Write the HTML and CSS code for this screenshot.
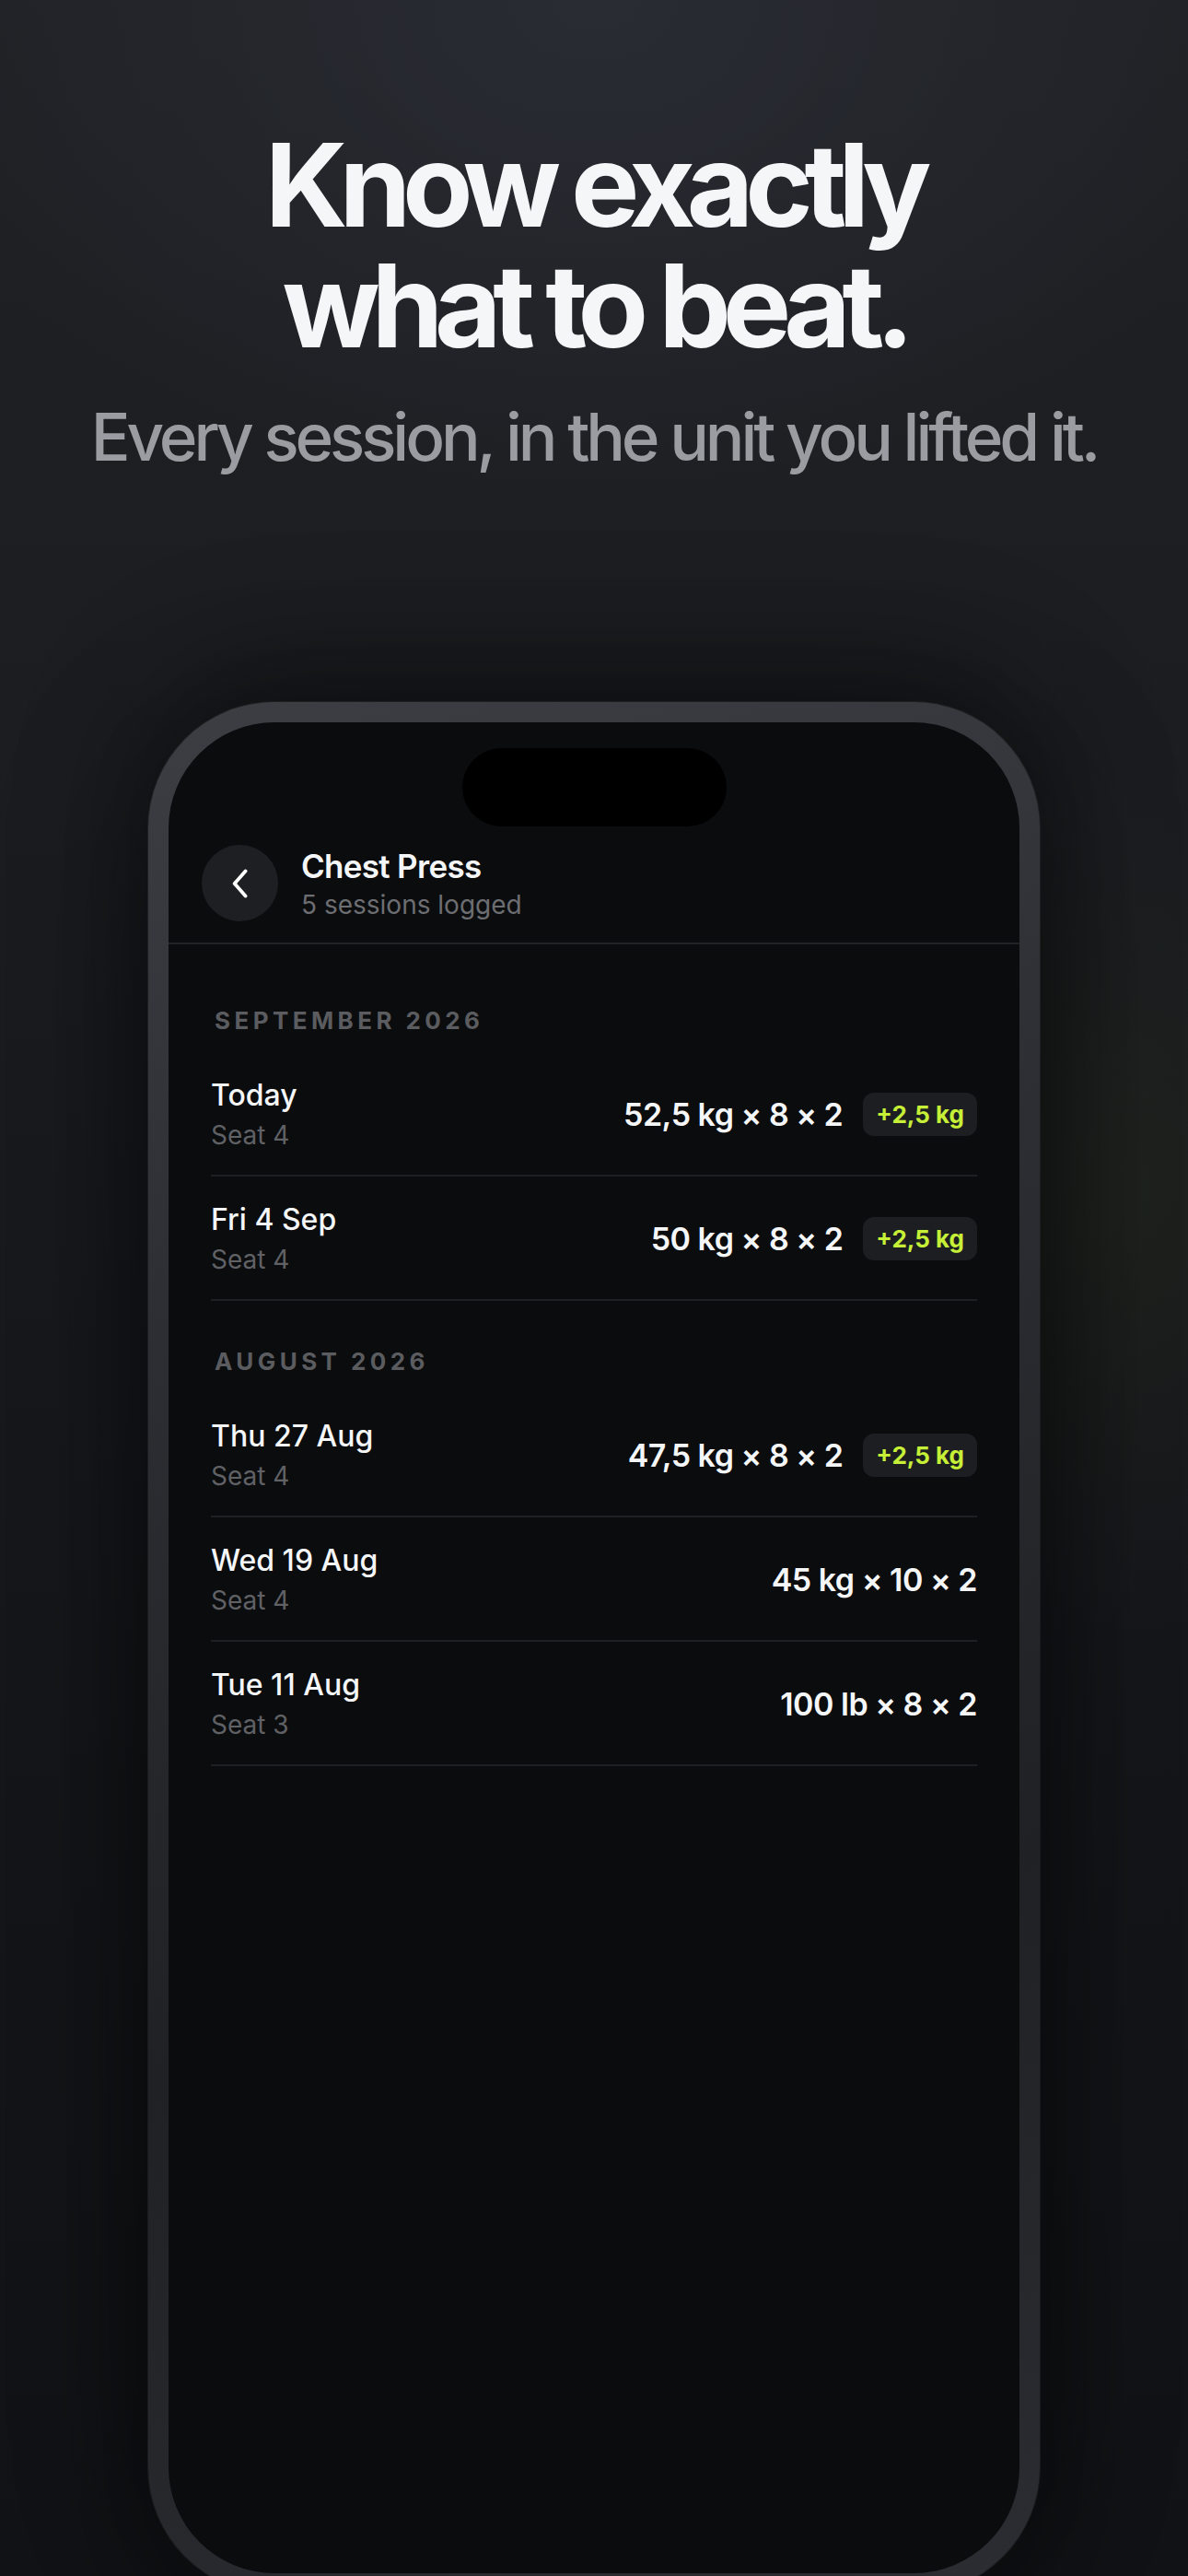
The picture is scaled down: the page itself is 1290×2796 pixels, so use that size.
FILE: index.html
```html
<!DOCTYPE html>
<html lang="en">
<head>
    <meta charset="UTF-8">
    <meta name="viewport" content="width=device-width, initial-scale=1.0">
    <title>Know exactly what to beat</title>
    <link rel="stylesheet" href="styles.css">
</head>
<body>
    <main class="page">
        <header class="hero">
            <h1>Know exactly<br>what to beat.</h1>
            <p>Every session, in the unit you lifted it.</p>
        </header>

        <div class="phone">
            <div class="screen">
                <div class="island"></div>

                <div class="nav">
                    <button class="back" aria-label="Back">
                        <svg viewBox="0 0 24 24" width="38" height="38">
                            <path d="M15.5 3.5 L8 12 L15.5 20.5" fill="none" stroke="white" stroke-width="2.4" stroke-linecap="round" stroke-linejoin="round"/>
                        </svg>
                    </button>
                    <div class="nav-text">
                        <div class="nav-title">Chest Press</div>
                        <div class="nav-sub">5 sessions logged</div>
                    </div>
                </div>

                <div class="history">
                    <section class="month">
                        <h2>September 2026</h2>
                        <div class="entry">
                            <div class="entry-info">
                                <div class="entry-date">Today</div>
                                <div class="entry-seat">Seat 4</div>
                            </div>
                            <div class="entry-result">
                                <span class="entry-load">52,5 kg × 8 × 2</span>
                                <span class="delta">+2,5 kg</span>
                            </div>
                        </div>
                        <div class="entry">
                            <div class="entry-info">
                                <div class="entry-date">Fri 4 Sep</div>
                                <div class="entry-seat">Seat 4</div>
                            </div>
                            <div class="entry-result">
                                <span class="entry-load">50 kg × 8 × 2</span>
                                <span class="delta">+2,5 kg</span>
                            </div>
                        </div>
                    </section>

                    <section class="month">
                        <h2>August 2026</h2>
                        <div class="entry">
                            <div class="entry-info">
                                <div class="entry-date">Thu 27 Aug</div>
                                <div class="entry-seat">Seat 4</div>
                            </div>
                            <div class="entry-result">
                                <span class="entry-load">47,5 kg × 8 × 2</span>
                                <span class="delta">+2,5 kg</span>
                            </div>
                        </div>
                        <div class="entry">
                            <div class="entry-info">
                                <div class="entry-date">Wed 19 Aug</div>
                                <div class="entry-seat">Seat 4</div>
                            </div>
                            <div class="entry-result">
                                <span class="entry-load">45 kg × 10 × 2</span>
                            </div>
                        </div>
                        <div class="entry">
                            <div class="entry-info">
                                <div class="entry-date">Tue 11 Aug</div>
                                <div class="entry-seat">Seat 3</div>
                            </div>
                            <div class="entry-result">
                                <span class="entry-load">100 lb × 8 × 2</span>
                            </div>
                        </div>
                    </section>
                </div>
            </div>
        </div>
    </main>
</body>
</html>
```

FILE: styles.css
```css
html, body {
    margin: 0;
    padding: 0;
    height: 2796px;
    overflow: hidden;
}
body {
    font-family: Inter, "Noto Sans", sans-serif;
    color: #f5f6f8;
    background:
        radial-gradient(ellipse 420px 700px at 1230px 1300px, rgba(150, 190, 40, 0.05), transparent 70%),
        radial-gradient(ellipse 760px 560px at 50% 0, #292c33 0%, rgba(40, 43, 50, 0) 100%),
        linear-gradient(180deg, #1f2125 0%, #1b1d21 30%, #141619 70%, #111316 100%);
}
.page {
    text-align: center;
}

/* headline */
.hero {
    padding-top: 135px;
}
.hero h1 {
    margin: 0;
    font-size: 125px;
    line-height: 131px;
    font-weight: 700;
    letter-spacing: -0.074em;
    color: #f5f6f8;
}
.hero p {
    margin: 34px 0 0;
    font-size: 71px;
    line-height: 86px;
    font-weight: 500;
    letter-spacing: -0.058em;
    color: #9b9ca1;
}

/* device */
.phone {
    width: 924px;
    height: 2009px;
    margin: 245px auto 0;
    padding: 22px;
    border-radius: 137px;
    background: linear-gradient(165deg, #3c3e44 0%, #2c2e33 30%, #1f2125 65%, #2b2d32 100%);
    box-shadow: 0 0 0 1px rgba(255, 255, 255, 0.06), 0 -30px 140px rgba(0, 0, 0, 0.45), 0 40px 160px rgba(0, 0, 0, 0.4);
    text-align: left;
}
.screen {
    height: 100%;
    border-radius: 115px;
    background: #0b0c0e;
    overflow: hidden;
    padding-top: 28px;
    box-sizing: border-box;
}
.island {
    width: 287px;
    height: 85px;
    margin: 0 auto;
    border-radius: 43px;
    background: #000;
}

/* nav bar */
.nav {
    display: flex;
    align-items: center;
    gap: 25px;
    padding: 20px 36px 23px;
    border-bottom: 2px solid #222326;
}
.back {
    width: 83px;
    height: 83px;
    border: none;
    border-radius: 50%;
    background: #1e1f22;
    display: flex;
    align-items: center;
    justify-content: center;
    padding: 0;
    cursor: pointer;
}
.nav-title {
    font-size: 35px;
    line-height: 42px;
    font-weight: 600;
    letter-spacing: -0.02em;
    color: #f5f6f8;
}
.nav-sub {
    margin-top: 4px;
    font-size: 28px;
    line-height: 34px;
    color: #6d6e72;
}

/* history list */
.history {
    padding: 67px 46px 0;
}
.month + .month {
    margin-top: 50px;
}
.month h2 {
    margin: 0 0 18px;
    padding-left: 4px;
    font-size: 26px;
    line-height: 32px;
    font-weight: 700;
    letter-spacing: 0.17em;
    text-transform: uppercase;
    color: #5b5c60;
}
.entry {
    display: flex;
    justify-content: space-between;
    align-items: center;
    padding: 27px 0 26px;
    border-bottom: 2px solid #1f2023;
}
.entry-date {
    font-size: 32px;
    line-height: 40px;
    font-weight: 500;
    color: #f5f6f8;
}
.entry-seat {
    margin-top: 6px;
    font-size: 28px;
    line-height: 34px;
    color: #606165;
}
.entry-result {
    display: flex;
    align-items: center;
    gap: 22px;
}
.entry-load {
    font-size: 34px;
    font-weight: 600;
    letter-spacing: -0.015em;
    color: #f5f6f8;
}
.delta {
    display: flex;
    align-items: center;
    height: 47px;
    padding: 0 14px;
    border-radius: 12px;
    background: #1d1e21;
    font-size: 26px;
    font-weight: 700;
    color: #c6ef37;
}
```
